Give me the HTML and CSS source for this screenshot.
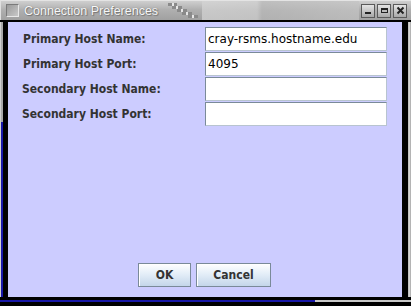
FILE: index.html
```html
<!DOCTYPE html>
<html>
<head>
<meta charset="utf-8">
<link rel="stylesheet" href="styles.css">
</head>
<body>
<div class="window">
  <div class="titlebar">
    <span class="title-icon"></span>
    <span class="title-text">Connection Preferences</span>
    <svg class="title-grip" width="36" height="18" viewBox="0 0 36 18">
      <g fill="#8a8a8a">
        <rect x="2" y="2" width="4" height="3"/><rect x="8" y="2" width="3" height="3"/>
        <rect x="6" y="5" width="4" height="3"/><rect x="12" y="5" width="4" height="3"/>
        <rect x="11" y="8" width="4" height="3"/><rect x="17" y="8" width="4" height="3"/>
        <rect x="16" y="11" width="4" height="3"/><rect x="22" y="11" width="4" height="3"/>
        <rect x="22" y="14" width="4" height="3"/><rect x="28" y="14" width="4" height="3"/>
      </g>
      <g fill="#e6e6e6">
        <rect x="6" y="2" width="2" height="3"/><rect x="10" y="5" width="2" height="3"/>
        <rect x="15" y="8" width="2" height="3"/><rect x="20" y="11" width="2" height="3"/>
        <rect x="26" y="14" width="2" height="3"/>
      </g>
    </svg>
    <span class="title-spacer"></span>
    <span class="wbtn"><svg width="9" height="9" viewBox="0 0 9 9"><rect x="1" y="6" width="6" height="2" fill="#222"/></svg></span>
    <span class="wbtn"><svg width="9" height="9" viewBox="0 0 9 9"><rect x="1" y="2" width="7" height="5" fill="#222"/><rect x="2" y="4" width="5" height="2" fill="#bbb"/></svg></span>
    <span class="wbtn"><svg width="9" height="9" viewBox="0 0 9 9"><path d="M1.5 1.5 L7.5 7.5 M7.5 1.5 L1.5 7.5" stroke="#222" stroke-width="2"/></svg></span>
  </div>
  <div class="middle">
    <div class="edge-left"></div>
    <div class="pad-black"></div>
    <div class="content">
      <div class="form">
        <label class="lbl">Primary Host Name:</label>
        <div class="field">cray-rsms.hostname.edu</div>
        <label class="lbl">Primary Host Port:</label>
        <div class="field">4095</div>
        <label class="lbl lbl-sec">Secondary Host Name:</label>
        <div class="field"></div>
        <label class="lbl lbl-sec">Secondary Host Port:</label>
        <div class="field"></div>
      </div>
      <div class="buttons">
        <button class="btn btn-ok">OK</button>
        <button class="btn btn-cancel">Cancel</button>
      </div>
    </div>
    <div class="pad-black-r"></div>
    <div class="edge-right"></div>
  </div>
  <div class="bottom">
    <div class="bottom-line"></div>
  </div>
</div>
</body>
</html>
```

FILE: styles.css
```css
html, body {
  margin: 0;
  padding: 0;
  background: #000;
}
.window {
  width: 411px;
  height: 306px;
  display: flex;
  flex-direction: column;
  background: #000;
  overflow: hidden;
}
.titlebar {
  height: 19px;
  display: flex;
  align-items: center;
  background: linear-gradient(to bottom, #cfcfcf 0%, #b0b0b0 45%, #a0a0a0 100%);
  border-left: 1px solid #e0e0e0;
  border-top: 1px solid #e4e4e4;
  padding-left: 5px;
  padding-right: 4px;
  margin-bottom: 2px;
}
.title-icon {
  width: 11px;
  height: 11px;
  border: 1px solid #7a7a7a;
  border-right-color: #e8e8e8;
  border-bottom-color: #e8e8e8;
  background: linear-gradient(135deg, #9a9a9a, #c8c8c8);
  margin-right: 5px;
}
.title-text {
  font-family: "Liberation Sans", Arial, sans-serif;
  font-size: 12.5px;
  color: #f8f8f8;
  text-shadow: 0 0 1px #666, 1px 1px 1px #777;
}
.title-grip {
  margin-left: 8px;
  align-self: flex-start;
}
.title-spacer {
  flex: 1;
  align-self: stretch;
  background: linear-gradient(to right, #d4d4d4 0, #d0d0d0 55px, #b8b8b8 60px, #c4c4c4 100%);
  opacity: 0.7;
}
.wbtn {
  width: 12px;
  height: 12px;
  margin-left: 2px;
  border: 1px solid #5a5a5a;
  background: linear-gradient(#e4e4e4, #a8a8a8);
  display: flex;
  align-items: center;
  justify-content: center;
}
.middle {
  flex: 1;
  display: flex;
  min-height: 0;
}
.edge-left {
  width: 3px;
  background: linear-gradient(to bottom, #a8a8a8 0, #a8a8a8 100px, #1818a8 100px, #1818a8 100%);
  border-left: 1px solid #d0d0d0;
  box-sizing: border-box;
}
.pad-black { width: 5px; }
.pad-black-r { width: 5px; }
.edge-right {
  width: 4px;
  background: linear-gradient(to right, #000 0, #000 1px, #b8b8b8 1px, #e0e0e0 3px, #888 4px);
}
.content {
  width: 394px;
  background: #ccccff;
  display: flex;
  flex-direction: column;
  padding: 5px 15px 10px 14px;
  box-sizing: border-box;
}
.form {
  display: grid;
  grid-template-columns: 1fr 182px;
  grid-auto-rows: 24px;
  row-gap: 1px;
}
.lbl {
  font-family: "DejaVu Sans Condensed", "DejaVu Sans", Verdana, sans-serif;
  font-stretch: condensed;
  font-weight: bold;
  font-size: 12px;
  color: #333333;
  display: flex;
  align-items: center;
  padding-left: 1px;
}
.lbl-sec { padding-left: 0; }
.field {
  background: #ffffff;
  border: 1px solid #7a8a99;
  border-right-color: #b8c4d0;
  border-bottom-color: #b8c4d0;
  box-shadow: inset 1px 1px 0 #ffffff;
  box-sizing: border-box;
  font-family: "DejaVu Sans", Verdana, sans-serif;
  font-size: 12px;
  color: #000;
  display: flex;
  align-items: center;
  padding-left: 2px;
}
.buttons {
  margin-top: auto;
  display: flex;
  justify-content: center;
  gap: 5px;
}
.btn {
  height: 24px;
  margin: 0;
  border: 1px solid #7a8a99;
  background: linear-gradient(to bottom, #ffffff 0%, #e4eef8 45%, #c4d6ea 100%);
  font-family: "DejaVu Sans Condensed", "DejaVu Sans", Verdana, sans-serif;
  font-stretch: condensed;
  font-weight: bold;
  font-size: 12px;
  color: #333333;
  padding: 0;
  box-shadow: inset 1px 1px 0 #ffffff;
}
.btn-ok { width: 53px; }
.btn-cancel { width: 75px; }
.bottom {
  height: 9px;
  display: flex;
  flex-direction: column;
  padding-top: 3px;
  box-sizing: border-box;
}
.bottom-line {
  height: 2px;
  background: linear-gradient(to right, #1818a8 0, #1818a8 315px, #c8c8c8 315px, #c8c8c8 100%);
}
```
